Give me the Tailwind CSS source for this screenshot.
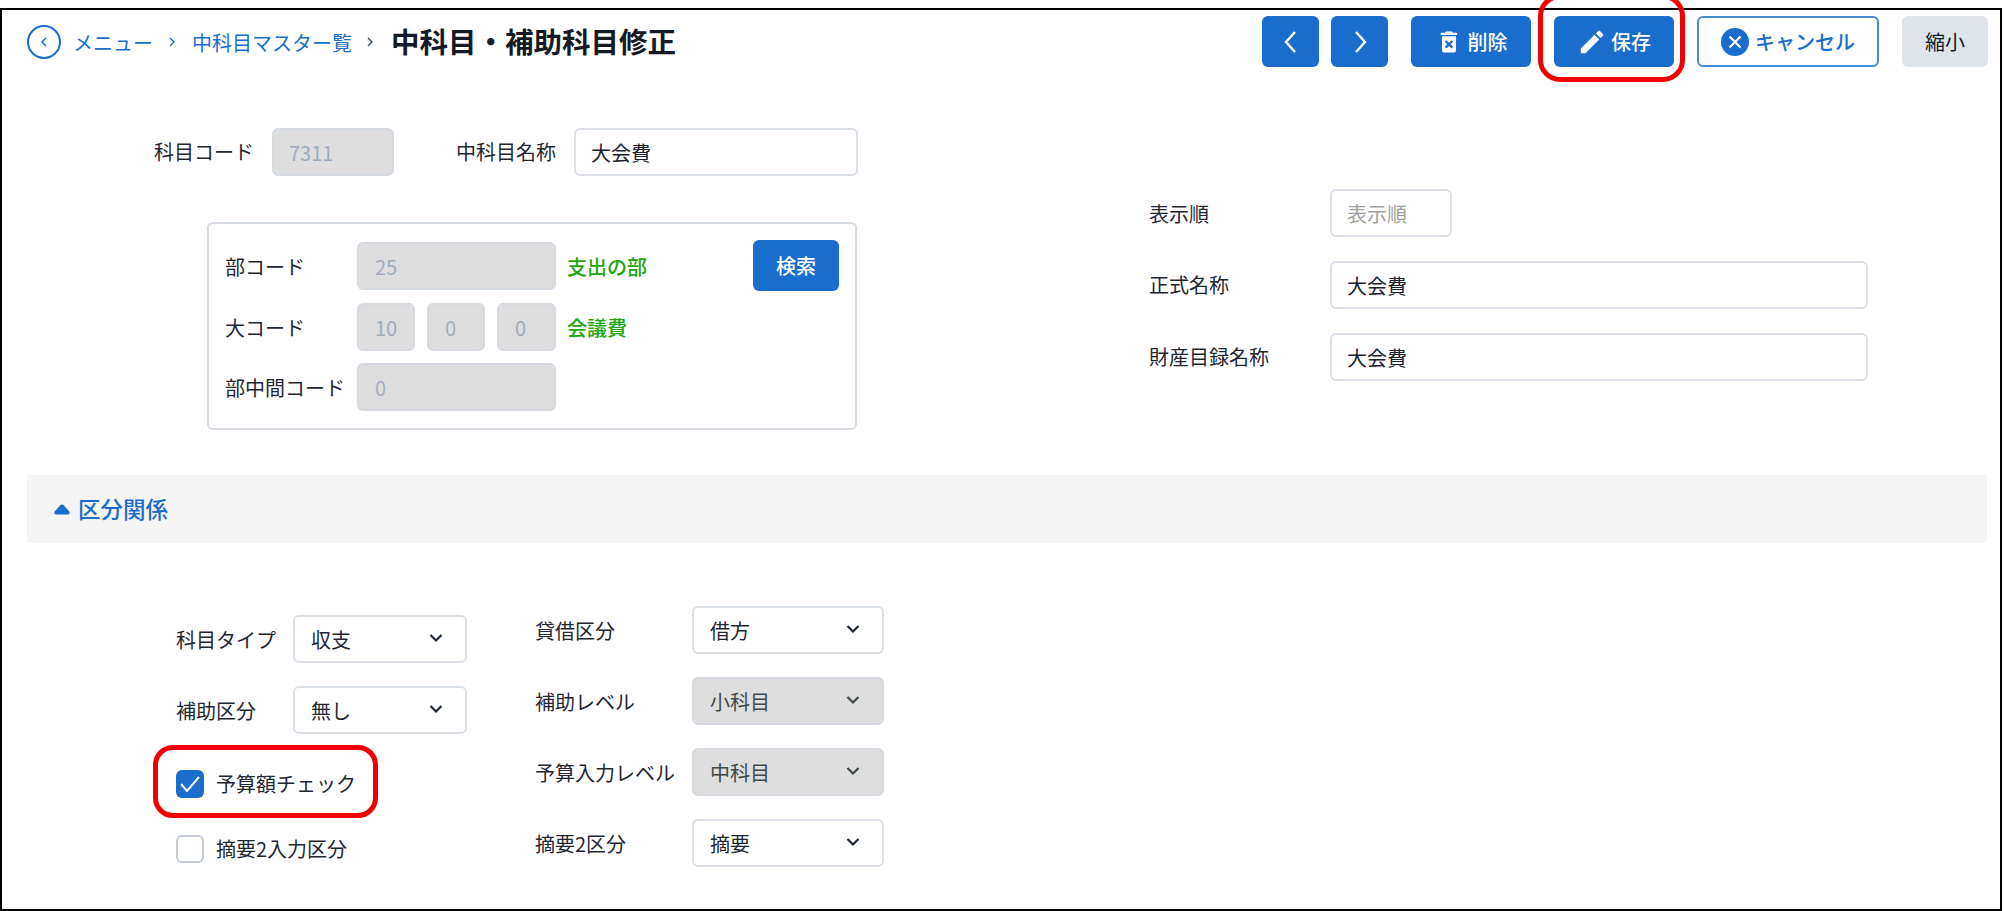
<!DOCTYPE html>
<html lang="ja">
<head>
  <meta charset="UTF-8" />
  <title>中科目・補助科目修正</title>
  <script src="https://cdn.jsdelivr.net/npm/@tailwindcss/browser@4"></script>
</head>
<body class="bg-white text-[#1f2733] text-[20px] font-['Noto_Sans_CJK_JP','Noto_Sans',sans-serif]">
  <div class="relative w-[2002px] h-[903px] mt-2 border-2 border-black overflow-hidden bg-white">

    <!-- header -->
    <header class="flex items-center justify-between pt-[6px] pl-[25px] pr-[12px]">
      <nav class="flex items-center h-[51px]">
        <span class="flex items-center justify-center w-[34px] h-[34px] rounded-full border-2 border-[#1a6dcc]">
          <svg class="w-3 h-3 text-[#1a6dcc]" viewBox="0 0 12 12" fill="none" stroke="currentColor" stroke-width="1.5"><path d="M8 2 4 6l4 4"/></svg>
        </span>
        <a class="ml-3 pt-[2px] text-[#1a6dcc]">メニュー</a>
        <svg class="ml-[13px] w-3 h-3 text-[#1a6dcc]" viewBox="0 0 12 12" fill="none" stroke="currentColor" stroke-width="1.4"><path d="m4 2 4 4-4 4"/></svg>
        <a class="ml-[14px] pt-[2px] text-[#1a6dcc] whitespace-nowrap">中科目マスター覧</a>
        <svg class="ml-[12px] w-3 h-3 text-[#33475f]" viewBox="0 0 12 12" fill="none" stroke="currentColor" stroke-width="1.4"><path d="m4 2 4 4-4 4"/></svg>
        <h1 class="ml-[15px] text-[28.500px] font-bold text-[#141b26] whitespace-nowrap">中科目・補助科目修正</h1>
      </nav>
      <div class="flex items-center h-[51px]">
        <button class="flex items-center justify-center w-[57px] h-[51px] rounded-md bg-[#1a6dcc] text-white">
          <svg class="w-6 h-6" viewBox="0 0 24 24" fill="none" stroke="currentColor" stroke-width="2.4"><path d="M16 2 7 12l9 10"/></svg>
        </button>
        <button class="ml-3 flex items-center justify-center w-[57px] h-[51px] rounded-md bg-[#1a6dcc] text-white">
          <svg class="w-6 h-6" viewBox="0 0 24 24" fill="none" stroke="currentColor" stroke-width="2.4"><path d="m8 2 9 10-9 10"/></svg>
        </button>
        <button class="ml-[23px] flex items-center justify-center gap-[5px] w-[120px] h-[51px] rounded-md bg-[#1a6dcc] text-white font-medium">
          <svg class="w-7 h-7" viewBox="0 0 24 24" fill="currentColor"><path d="M6 19c0 1.1.9 2 2 2h8c1.1 0 2-.9 2-2V7H6v12zm2.46-7.12 1.41-1.41L12 12.59l2.12-2.12 1.41 1.41L13.41 14l2.12 2.12-1.41 1.41L12 15.41l-2.12 2.12-1.41-1.41L10.59 14l-2.13-2.12zM15.5 4l-1-1h-5l-1 1H5v2h14V4z"/></svg>
          削除
        </button>
        <button class="ml-[23px] flex items-center justify-center gap-[4px] w-[120px] h-[51px] rounded-md bg-[#1a6dcc] text-white font-medium">
          <svg class="w-[30px] h-[30px]" viewBox="0 0 24 24" fill="currentColor"><path d="M3 17.25V21h3.75L17.81 9.94l-3.75-3.75L3 17.25zM20.71 7.04c.39-.39.39-1.02 0-1.41l-2.34-2.34c-.39-.39-1.02-.39-1.41 0l-1.83 1.83 3.75 3.75 1.83-1.83z"/></svg>
          保存
        </button>
        <button class="ml-[23px] flex items-center justify-center gap-[6px] w-[182px] h-[51px] rounded-md border-2 border-[#4a8bd8] bg-white text-[#1a6dcc] font-medium">
          <svg class="w-7 h-7" viewBox="0 0 28 28"><circle cx="14" cy="14" r="14" fill="#1a6dcc"/><path d="m8.500 8.500 11 11m0-11-11 11" stroke="#fff" stroke-width="2.2"/></svg>
          キャンセル
        </button>
        <button class="ml-[23px] w-[86px] h-[51px] rounded-md bg-[#dfe3ea] text-[#141b26]">縮小</button>
      </div>
    </header>

    <!-- basic fields -->
    <section class="flex mt-[61px]">
      <div class="ml-[152px] w-[704px]">
        <div class="flex items-center">
          <label class="w-[118px] whitespace-nowrap">科目コード</label>
          <input disabled value="7311" class="w-[122px] h-12 px-[15px] rounded-md border-2 border-[#d5dae3] bg-[#dedede] text-[#a0aec0]" />
          <label class="ml-[62px] w-[118px] whitespace-nowrap">中科目名称</label>
          <input value="大会費" class="w-[284px] h-12 px-[15px] rounded-md border-2 border-[#dbe0e8] text-[#1a202c]" />
        </div>
        <div class="relative ml-[53px] mt-[46px] w-[650px] h-[208px] rounded-md border-2 border-[#d5dae3]">
          <div class="flex flex-col gap-3 pt-[18px] pl-4">
            <div class="flex items-center">
              <label class="w-[132px] pt-[2px]">部コード</label>
              <input disabled value="25" class="w-[199px] h-12 px-4 rounded-md border-2 border-[#d5dae3] bg-[#dedede] text-[#a0aec0]" />
              <span class="ml-[11px] pt-[1px] font-medium text-[#22a50e]">支出の部</span>
            </div>
            <div class="flex items-center mt-[1px]">
              <label class="w-[132px] pt-[2px]">大コード</label>
              <div class="flex gap-3 w-[199px]">
                <input disabled value="10" class="w-[58px] h-12 px-4 rounded-md border-2 border-[#d5dae3] bg-[#dedede] text-[#a0aec0]" />
                <input disabled value="0" class="w-[58px] h-12 px-4 rounded-md border-2 border-[#d5dae3] bg-[#dedede] text-[#a0aec0]" />
                <input disabled value="0" class="w-[59px] h-12 px-4 rounded-md border-2 border-[#d5dae3] bg-[#dedede] text-[#a0aec0]" />
              </div>
              <span class="ml-[11px] pt-[1px] font-medium text-[#22a50e]">会議費</span>
            </div>
            <div class="flex items-center">
              <label class="w-[132px] pt-[2px] whitespace-nowrap">部中間コード</label>
              <input disabled value="0" class="w-[199px] h-12 px-4 rounded-md border-2 border-[#d5dae3] bg-[#dedede] text-[#a0aec0]" />
            </div>
          </div>
          <button class="absolute top-4 right-4 w-[86px] h-[51px] rounded-md bg-[#1a6dcc] text-white font-medium">検索</button>
        </div>
      </div>

      <div class="ml-[291px] mt-[61px] flex flex-col gap-6">
        <div class="flex items-center">
          <label class="w-[181px] pt-[1px]">表示順</label>
          <input placeholder="表示順" class="w-[122px] h-12 px-[15px] rounded-md border-2 border-[#dbe0e8] placeholder:text-[#a0a0a0]" />
        </div>
        <div class="flex items-center">
          <label class="w-[181px]">正式名称</label>
          <input value="大会費" class="w-[538px] h-12 px-[15px] rounded-md border-2 border-[#dbe0e8] text-[#1a202c]" />
        </div>
        <div class="flex items-center">
          <label class="w-[181px]">財産目録名称</label>
          <input value="大会費" class="w-[538px] h-12 px-[15px] rounded-md border-2 border-[#dbe0e8] text-[#1a202c]" />
        </div>
      </div>
    </section>

    <!-- section header -->
    <div class="flex items-center gap-2 mt-[45px] ml-[25px] mr-[13px] h-[68px] pl-[27px] bg-[#f5f5f5] text-[#1a6dcc]">
      <svg class="w-4 h-[11px]" viewBox="0 0 16 11" fill="currentColor"><path d="M8 .5a2 2 0 0 1 1.500.6l5.600 6.200c1 1.200.4 3.200-1.200 3.200H2.100C.5 10.500-.1 8.500.9 7.300l5.600-6.200A2 2 0 0 1 8 .5z"/></svg>
      <span class="text-[22.500px] font-medium">区分関係</span>
    </div>

    <!-- classification -->
    <section class="flex mt-[63px] ml-[174px]">
      <div class="w-[359px] mt-[9px]">
        <div class="flex items-center">
          <label class="w-[117px] pt-[2px] whitespace-nowrap">科目タイプ</label>
          <div class="relative w-[174px]">
            <select class="w-full h-12 pl-4 pt-[2px] rounded-md border-2 border-[#dbe0e8] bg-white appearance-none"><option>収支</option></select>
            <svg class="absolute top-4 right-[24px] w-[14px] h-[14px] pointer-events-none" viewBox="0 0 14 14" fill="none" stroke="#1f2733" stroke-width="2.2"><path d="m1.500 4 5.500 5.500L12.500 4"/></svg>
          </div>
        </div>
        <div class="flex items-center mt-[23px]">
          <label class="w-[117px] pt-[2px]">補助区分</label>
          <div class="relative w-[174px]">
            <select class="w-full h-12 pl-4 pt-[2px] rounded-md border-2 border-[#dbe0e8] bg-white appearance-none"><option>無し</option></select>
            <svg class="absolute top-4 right-[24px] w-[14px] h-[14px] pointer-events-none" viewBox="0 0 14 14" fill="none" stroke="#1f2733" stroke-width="2.2"><path d="m1.500 4 5.500 5.500L12.500 4"/></svg>
          </div>
        </div>
        <label class="flex items-center gap-3 mt-[35px]">
          <span class="flex items-center justify-center w-7 h-7 rounded-md bg-[#1a6dcc]">
            <svg class="w-5 h-5" viewBox="0 0 20 20" fill="none" stroke="#fff" stroke-width="2"><path d="m1 10 6 7L19 3"/></svg>
          </span>
          予算額チェック
        </label>
        <label class="flex items-center gap-3 mt-[35px]">
          <span class="w-7 h-7 rounded-md border-2 border-[#c5ccd8]"></span>
          摘要2入力区分
        </label>
      </div>

      <div class="flex flex-col gap-[23px]">
        <div class="flex items-center">
          <label class="w-[157px] pt-[2px]">貸借区分</label>
          <div class="relative w-[192px]">
            <select class="w-full h-12 pl-4 pt-[2px] rounded-md border-2 border-[#dbe0e8] bg-white appearance-none"><option>借方</option></select>
            <svg class="absolute top-4 right-[24px] w-[14px] h-[14px] pointer-events-none" viewBox="0 0 14 14" fill="none" stroke="#1f2733" stroke-width="2.2"><path d="m1.500 4 5.500 5.500L12.500 4"/></svg>
          </div>
        </div>
        <div class="flex items-center">
          <label class="w-[157px] pt-[2px]">補助レベル</label>
          <div class="relative w-[192px]">
            <select disabled class="w-full h-12 pl-4 pt-[2px] rounded-md border-2 border-[#d5dae3] bg-[#dedede] text-[#3d4a48] appearance-none opacity-100"><option>小科目</option></select>
            <svg class="absolute top-4 right-[24px] w-[14px] h-[14px] pointer-events-none" viewBox="0 0 14 14" fill="none" stroke="#3d4a48" stroke-width="2.2"><path d="m1.500 4 5.500 5.500L12.500 4"/></svg>
          </div>
        </div>
        <div class="flex items-center">
          <label class="w-[157px] pt-[2px] whitespace-nowrap">予算入力レベル</label>
          <div class="relative w-[192px]">
            <select disabled class="w-full h-12 pl-4 pt-[2px] rounded-md border-2 border-[#d5dae3] bg-[#dedede] text-[#3d4a48] appearance-none opacity-100"><option>中科目</option></select>
            <svg class="absolute top-4 right-[24px] w-[14px] h-[14px] pointer-events-none" viewBox="0 0 14 14" fill="none" stroke="#3d4a48" stroke-width="2.2"><path d="m1.500 4 5.500 5.500L12.500 4"/></svg>
          </div>
        </div>
        <div class="flex items-center">
          <label class="w-[157px] pt-[2px]">摘要2区分</label>
          <div class="relative w-[192px]">
            <select class="w-full h-12 pl-4 pt-[2px] rounded-md border-2 border-[#dbe0e8] bg-white appearance-none"><option>摘要</option></select>
            <svg class="absolute top-4 right-[24px] w-[14px] h-[14px] pointer-events-none" viewBox="0 0 14 14" fill="none" stroke="#1f2733" stroke-width="2.2"><path d="m1.500 4 5.500 5.500L12.500 4"/></svg>
          </div>
        </div>
      </div>
    </section>
  </div>

  <!-- red annotation frames -->
  <div class="absolute left-[1538px] top-[-6px] w-[147px] h-[88px] rounded-[22px] border-[5px] border-[#f00000]"></div>
  <div class="absolute left-[153px] top-[745px] w-[225px] h-[73px] rounded-[20px] border-[5px] border-[#f00000]"></div>
</body>
</html>
